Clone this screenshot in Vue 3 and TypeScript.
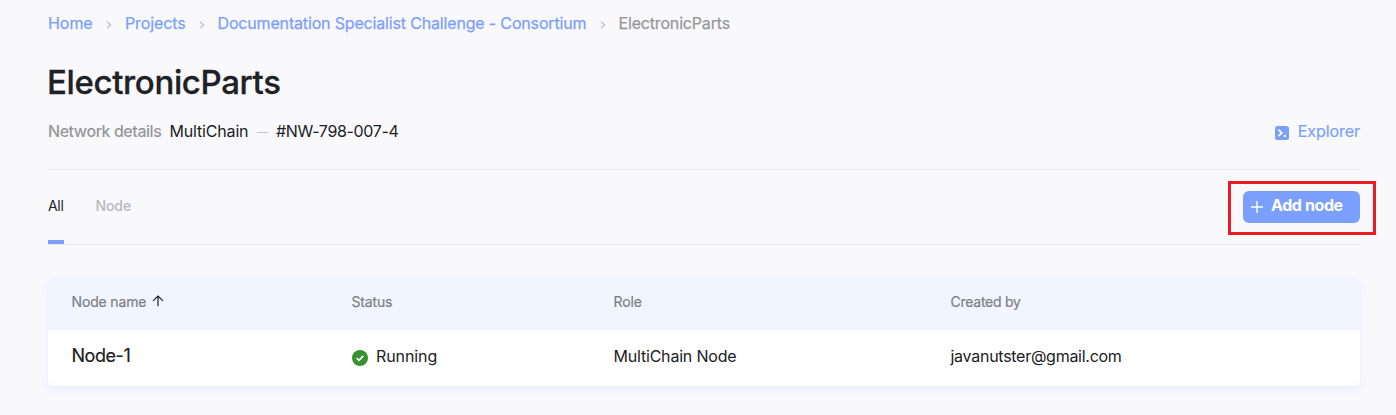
<script setup lang="ts">
interface Crumb { label: string; cls: string }
const crumbs: Crumb[] = [
  { label: 'Home', cls: 'home' },
  { label: 'Projects', cls: 'projects' },
  { label: 'Documentation Specialist Challenge - Consortium', cls: 'project' },
]
interface NodeRow { name: string; status: string; role: string; createdBy: string }
const rows: NodeRow[] = [
  { name: 'Node-1', status: 'Running', role: 'MultiChain Node', createdBy: 'javanutster@gmail.com' },
]
</script>

<template>
  <main class="page">
    <nav class="crumbs">
      <template v-for="c in crumbs" :key="c.label">
        <a :class="['crumb', c.cls]">{{ c.label }}</a>
        <svg class="chevron" width="6" height="8" viewBox="0 0 6 8"><path d="M1 .8 4.6 4 1 7.2" fill="none" stroke="#c6c7ca" stroke-width="1.4" /></svg>
      </template>
      <span class="crumb current">ElectronicParts</span>
    </nav>

    <h1><span>ElectronicParts</span></h1>

    <div class="details">
      <span class="label">Network details</span>
      <span class="platform">MultiChain</span>
      <i class="dash"></i>
      <span class="netid">#NW-798-007-4</span>
      <a class="explorer">
        <svg width="14" height="14" viewBox="0 0 14 14">
          <rect width="14" height="14" rx="2.5" fill="#7b9fff" />
          <path d="M3.4 3.6 6.7 6.9 3.4 10.2" fill="none" stroke="#fff" stroke-width="1.9" />
          <rect x="8.8" y="8.9" width="2.1" height="2.1" fill="#fff" />
        </svg>
        <span>Explorer</span>
      </a>
    </div>

    <div class="tabbar">
      <div class="tab active"><span>All</span></div>
      <div class="tab"><span>Node</span></div>
      <div class="highlight">
        <button class="add">
          <svg width="12" height="12" viewBox="0 0 12 12"><path d="M6 0v12M0 6h12" stroke="#fff" stroke-width="1.4" /></svg>
          <span>Add node</span>
        </button>
      </div>
    </div>

    <section class="table">
      <div class="row head">
        <div><span class="h-name">Node name</span><svg class="sort" width="12" height="12" viewBox="0 0 12 12"><path d="M6 11.2V1M1 5.9 6 1l5 4.9" fill="none" stroke="#202124" stroke-width="1.2" /></svg></div>
        <div><span class="h-status">Status</span></div>
        <div><span class="h-role">Role</span></div>
        <div><span class="h-by">Created by</span></div>
      </div>
      <div v-for="r in rows" :key="r.name" class="row body">
        <div class="name"><span>{{ r.name }}</span></div>
        <div class="status">
          <svg width="16" height="16" viewBox="0 0 16 16"><circle cx="8" cy="8" r="8" fill="#36912f" /><path d="M4.6 8.1 7 10.3l4.3-4.4" fill="none" stroke="#fff" stroke-width="1.7" /></svg>
          <span>{{ r.status }}</span>
        </div>
        <div class="role"><span>{{ r.role }}</span></div>
        <div class="by"><span>{{ r.createdBy }}</span></div>
      </div>
    </section>
  </main>
</template>

<style>
body { margin: 0; background: #f9f9fc; overflow: hidden; }
</style>

<style scoped>
.page {
  box-sizing: border-box;
  height: 415px;
  padding: 13px 36px 0 48px;
  font-family: Inter, "Liberation Sans", sans-serif;
  font-size: 16px;
  line-height: 20px;
  color: #202124;
  white-space: nowrap;
  background: #f9f9fc;
}
.crumbs { display: flex; align-items: center; height: 20px; }
.crumb { color: #7b9fff; font-weight: 400; -webkit-text-stroke: .25px currentColor; }
.home { width: 58px; letter-spacing: -.05px; }
.projects { width: 74px; letter-spacing: -.12px; }
.project { width: 382px; letter-spacing: -.165px; margin-left: -.5px; margin-right: .5px; }
.chevron { width: 6px; margin: 4px 13px 0 0; }
.current { color: #97979a; letter-spacing: -.17px; margin-left: -.5px; }
h1 { margin: 29px 0 0 -1px; height: 40px; font-size: 33px; line-height: 40px; font-weight: 500; letter-spacing: -.36px; -webkit-text-stroke: .3px currentColor; }
.details { display: flex; align-items: center; height: 20px; margin-top: 19px; width: 1312px; }
.label { width: 121.5px; color: #97979a; font-weight: 500; letter-spacing: -.45px; }
.platform { width: 87.5px; letter-spacing: -.17px; }
.dash { width: 11px; height: 1px; margin: 3px 8px 0 0; background: #c4c4c8; }
.netid { letter-spacing: -.33px; }
.explorer { display: flex; align-items: center; margin-left: auto; color: #7b9fff; }
.explorer svg { margin: 3px 9px 0 0; }
.explorer span { letter-spacing: -.05px; -webkit-text-stroke: .2px currentColor; }
.tabbar {
  display: flex;
  box-sizing: border-box;
  width: 1312px;
  height: 76px;
  margin-top: 28px;
  border-top: 1px solid #e7e7eb;
  border-bottom: 1px solid #e7e7eb;
}
.tab { box-sizing: border-box; height: 74px; padding-top: 26px; margin-right: 31.5px; font-size: 14px; font-weight: 500; color: #b7b8bb; letter-spacing: -.1px; }
.tab.active { width: 16px; color: #202124; font-weight: 400; letter-spacing: -.3px; border-bottom: 4px solid #7b9fff; }
.highlight {
  box-sizing: border-box;
  flex: none;
  width: 148px;
  height: 54px;
  margin: 11px -16px 0 auto;
  padding: 7px 13px 0 12px;
  border: 3px solid #ed1c24;
}
.add {
  display: flex;
  align-items: center;
  width: 117px;
  height: 32px;
  padding: 0 0 0 8px;
  border: 0;
  border-radius: 6px;
  background: #7b9fff;
  color: #fff;
  font: 700 16px/20px Inter, sans-serif;
  letter-spacing: -.4px;
}
.add svg { margin: 0 8px 0 0; }
.add span { margin-top: -4px; }
.table { width: 1312px; height: 109px; margin-top: 32px; border-radius: 6px; overflow: hidden; background: #fff; box-shadow: 0 4px 10px rgba(90, 100, 200, .08); }
.row { display: grid; grid-template-columns: 280px 262px 337px 1fr; padding-left: 23.5px; }
.row > div { display: flex; align-items: center; }
.head { height: 52px; padding-bottom: 1px; background: #f0f5ff; font-size: 14px; color: #7e7f83; letter-spacing: -.15px; -webkit-text-stroke: .2px currentColor; }
.head span { margin-top: -3px; }
.h-by { letter-spacing: -.25px; }
.sort { margin: -4px 0 0 5.5px; -webkit-text-stroke: 0; }
.body { height: 51px; }
.name { font-size: 18px; letter-spacing: -.45px; -webkit-text-stroke: .2px currentColor; }
.status { letter-spacing: -.1px; }
.status svg { margin: 4px 8px 0 .5px; }
.role { letter-spacing: -.2px; }
.by { letter-spacing: -.27px; }
</style>
